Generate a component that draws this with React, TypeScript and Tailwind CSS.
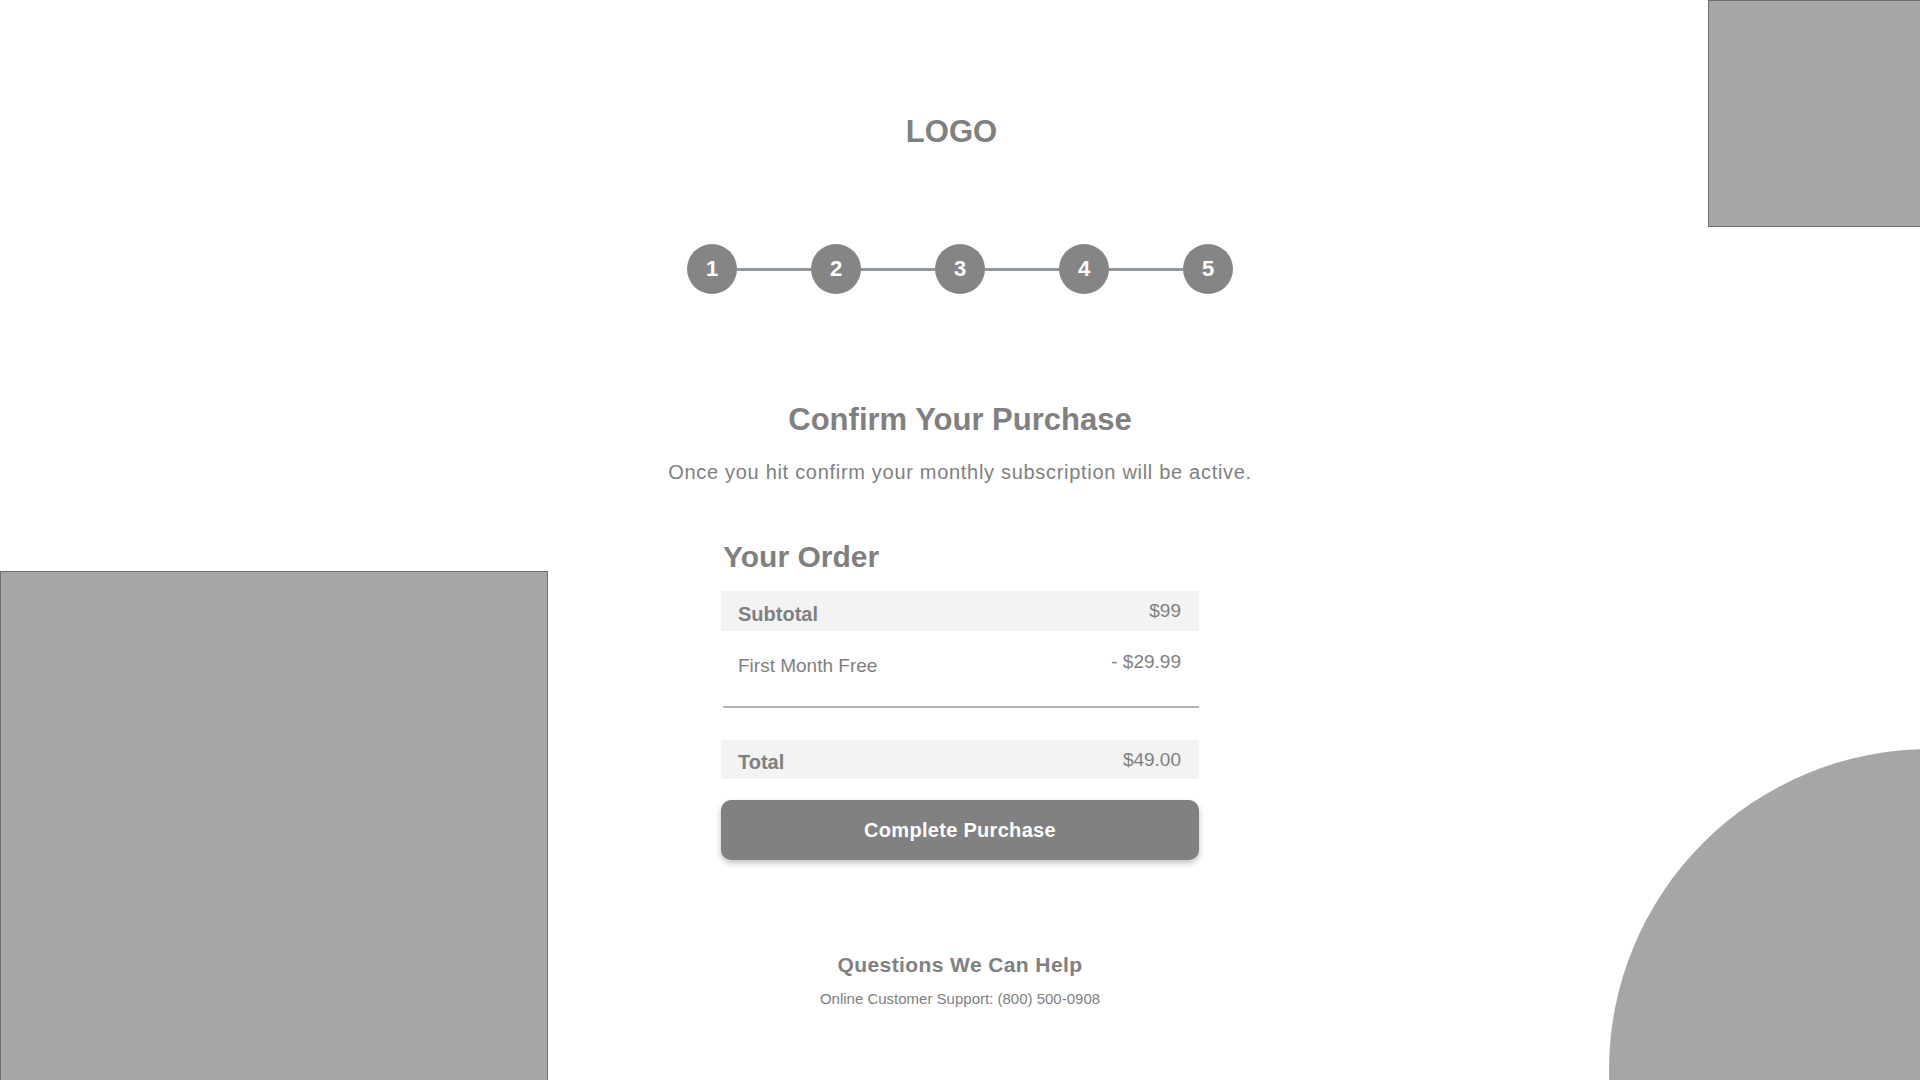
import React from 'react'

const steps = [1, 2, 3, 4, 5]

const font = { fontFamily: '"Liberation Sans", Arial, sans-serif' }

function Stepper() {
  return (
    <div className="flex items-center mt-[97px]">
      {steps.map((n, i) => (
        <React.Fragment key={n}>
          {i > 0 && <div className="w-[74px] h-[3px] bg-[#8e959b]" />}
          <div className="w-[50px] h-[50px] rounded-full bg-[#858585] flex items-center justify-center text-white font-bold text-[22px] leading-none">
            {n}
          </div>
        </React.Fragment>
      ))}
    </div>
  )
}

export default function App() {
  return (
    <div className="relative w-full h-[1080px] overflow-hidden bg-white text-[#808080]" style={font}>
      {/* decorative shapes */}
      <div className="absolute right-[-1px] top-0 w-[213px] h-[227px] border border-[#6e6e6e] bg-[#a6a6a6]" />
      <div className="absolute left-0 top-[571px] w-[548px] h-[520px] border border-[#6e6e6e] bg-[#a6a6a6]" />
      <div className="absolute right-[-331px] top-[749px] w-[642px] h-[642px] rounded-full bg-[#a6a6a6]" />

      <div className="relative flex flex-col items-center pt-[116px]">
        <div className="mr-[17px] text-[31px] font-bold leading-none">LOGO</div>

        <Stepper />

        <h1 className="mt-[110px] text-[31px] font-bold leading-none">Confirm Your Purchase</h1>
        <p className="mt-[27px] text-[20px] leading-none tracking-[0.7px]">
          Once you hit confirm your monthly subscription will be active.
        </p>

        {/* order summary */}
        <div className="mt-[60px] w-[478px] flex flex-col">
          <h2 className="pl-[2px] text-[30px] font-bold leading-none">Your Order</h2>

          <div className="mt-[19px] h-[40px] bg-[#f3f3f3] flex justify-between items-start pl-[17px] pr-[18px]">
            <span className="mt-[13px] text-[20px] font-bold leading-none">Subtotal</span>
            <span className="mt-[10px] text-[19px] leading-none">$99</span>
          </div>

          <div className="h-[75px] flex justify-between items-start pl-[17px] pr-[18px]">
            <span className="mt-[25px] text-[19px] leading-none">First Month Free</span>
            <span className="mt-[21px] text-[19px] leading-none">- $29.99</span>
          </div>

          <div className="ml-[2px] h-[2px] bg-[#b3b3b3]" />

          <div className="mt-[32px] h-[39px] bg-[#f3f3f3] flex justify-between items-start pl-[17px] pr-[18px]">
            <span className="mt-[12px] text-[20px] font-bold leading-none">Total</span>
            <span className="mt-[10px] text-[19px] leading-none">$49.00</span>
          </div>

          <button className="mt-[21px] h-[60px] w-full rounded-[10px] bg-[#818181] text-white text-[20px] font-bold leading-none tracking-[0.3px] shadow-[0_3px_6px_rgba(0,0,0,0.25)]">
            Complete Purchase
          </button>
        </div>

        {/* help */}
        <div className="mt-[94px] text-[21px] font-bold leading-none tracking-[0.4px]">Questions We Can Help</div>
        <div className="mt-[16px] text-[15px] leading-none">Online Customer Support: (800) 500-0908</div>
      </div>
    </div>
  )
}
